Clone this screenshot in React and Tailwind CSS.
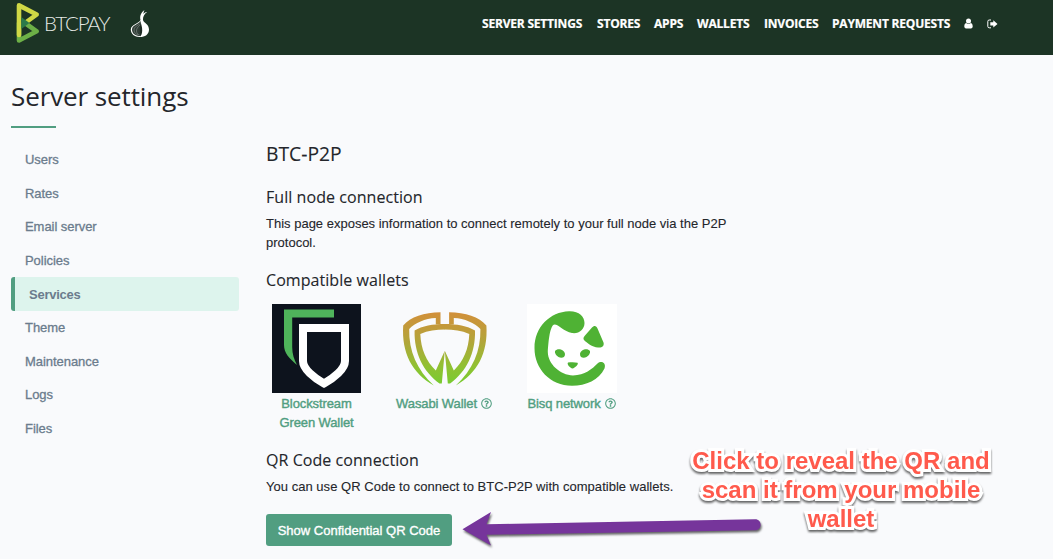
import React from "react";
import { FaRegQuestionCircle } from "react-icons/fa";

const NAV = [
  ["SERVER SETTINGS", "w-[101px]"],
  ["STORES", "w-[43px]"],
  ["APPS", "w-[29px]"],
  ["WALLETS", "w-[53px]"],
  ["INVOICES", "w-[54px]"],
  ["PAYMENT REQUESTS", "w-[118px]"],
];

const MENU = ["Users", "Rates", "Email server", "Policies", "Services", "Theme", "Maintenance", "Logs", "Files"];

function BtcPayMark() {
  return (
    <svg width="24" height="42" viewBox="0 0 24 42" fill="none">
      <path d="M3 21V38.500L20.700 29.300L9 21" stroke="#6db047" strokeWidth="4.600" strokeLinejoin="round" strokeLinecap="round" />
      <path d="M3 33V3.400L20.700 12.500L9 21" stroke="#d0d845" strokeWidth="4.600" strokeLinejoin="round" strokeLinecap="round" />
      <path d="M5.300 15L13.500 21L5.300 27Z" fill="#2c7a4a" />
    </svg>
  );
}

function OnionMark() {
  return (
    <svg width="20" height="29" viewBox="0 0 20 29" fill="none">
      <path d="M10.500 11C9.500 7 11 3.500 14.500 1C13.500 3 13.600 4 13.400 5C14.500 3.600 16 3 17 3C14 5 12.800 8 13 11C13.500 14 19 15 19 20.500C19 25.500 15 28 9.800 28C4.500 28 .8 25 .8 20.500C.8 15.500 9 14.500 10.500 11Z" fill="#fff" />
      <path d="M10.500 12C8.500 15.500 2 16 2 20.700C2 24.500 5.500 27 10 27Z" fill="#2f3d36" />
      <path d="M9.600 15C6 17.500 4 18 4 21C4 24 6.500 25.500 8.500 26M10 16C7.500 18.500 6.500 19.500 6.500 22C6.500 24 8 25.500 9.500 26" stroke="#858d89" strokeWidth=".6" />
      <path d="M10.500 12C11.300 16 12.300 18 12.200 21.500C12.100 24.500 11.500 26.500 10 27.500C10 24 9.500 20 10.500 12Z" fill="#1d2b24" />
    </svg>
  );
}

function UserIcon() {
  return (
    <svg width="9" height="11" viewBox="0 0 9 11" fill="#fff">
      <circle cx="4.500" cy="2.900" r="2.500" />
      <path d="M2.200 4.900C3.500 6.300 5.500 6.300 6.800 4.900C8.300 5.100 8.700 7 8.700 8.600C8.700 9.800 8 10.400 7 10.400H2C1 10.400 .3 9.800 .3 8.600C.3 7 .7 5.100 2.200 4.900Z" />
    </svg>
  );
}

function SignOutIcon() {
  return (
    <svg width="11" height="10" viewBox="0 0 11 10" fill="none">
      <path d="M4 1H2.200C1.300 1 .8 1.500 .8 2.400V7.400C.8 8.300 1.300 8.800 2.200 8.800H4" stroke="#fff" strokeWidth="1" />
      <path d="M3.300 3.300H6.300V1.200L10.500 4.900L6.300 8.600V6.500H3.300Z" fill="#fff" />
    </svg>
  );
}

function GreenWalletLogo() {
  return (
    <svg width="89" height="89" viewBox="0 0 89 89" fill="none">
      <rect width="89" height="89" fill="#0d131d" />
      <path d="M12 5.500H62V13.500H20.200V43C20.200 50 22 55.500 25 61C17 54 12 49 12 41Z" fill="#4fb45b" />
      <path d="M31 24H73V57C73 65 62 74 52 79.500C42 74 31 65 31 57Z" stroke="#fff" strokeWidth="8" />
    </svg>
  );
}

function WasabiHalf() {
  return (
    <>
      <path d="M40.500 8.300V20.500H35.800V14C25 14.500 15 19 9.200 25C8.700 47 17 66 33.800 81.500C12 69 1.500 49 3.200 21.500C10.500 13 24 8.500 40.500 8.300Z" />
      <path d="M45 20C33 20 22 22 14.600 26.500C14 49 23 67.500 39.500 79.500L41.800 79.600L44.800 46.700L35.800 66.500C26 57 21 45 20.300 30C28 26.500 36 25.500 45 25.500Z" />
    </>
  );
}

function WasabiLogo() {
  return (
    <svg width="89" height="89" viewBox="0 0 89 89" fill="none">
      <defs>
        <linearGradient id="wasabi" x1="0" y1="8" x2="0" y2="82" gradientUnits="userSpaceOnUse">
          <stop stopColor="#d28f3a" />
          <stop offset=".4" stopColor="#b2a53a" />
          <stop offset=".75" stopColor="#8fc232" />
          <stop offset="1" stopColor="#75cc30" />
        </linearGradient>
      </defs>
      <g fill="url(#wasabi)">
        <WasabiHalf />
        <g transform="matrix(-1 0 0 1 89.6 0)"><WasabiHalf /></g>
      </g>
    </svg>
  );
}

function BisqLogo() {
  return (
    <svg width="90" height="89" viewBox="0 0 90 89" fill="none">
      <rect width="90" height="89" fill="#fff" />
      <path d="M42 7.300C52 7 57.500 12.500 57.500 19C57.500 25.500 52 30 45 29C37 27.500 31.500 20.500 27.500 20.500C23 21 21.500 37 20.800 48C21 60 33 71 46 71.500C58 71 65 65 70.500 59.500C74.500 56 79.500 59 77.500 64.500C72 76 59 81.800 45 81.800C23 81.500 7.500 65 7.500 44C7.500 23 23 8 42 7.300Z" fill="#4fb234" />
      <path d="M65 23.500C67 21 69.500 21.500 70.500 24.500L76.500 38.500C77.500 42 75 44 71 43.500C65 43 60 39 57 36C56 34.500 56.500 33 58 31.500Z" fill="#4fb234" />
      <path d="M28 47C31 43.500 37.500 46 38 50C38.200 54 34 54.500 31.500 53C29 51.500 27.500 49 28 47ZM63 47C60 43.500 53.500 46 53 50C52.800 54 57 54.500 59.500 53C62 51.500 63.500 49 63 47ZM41 58.500C44 58 48 58 50.500 58.700C52 60 48 64 45.500 64.500C43 64 39.500 60 41 58.500Z" fill="#4fb234" />
    </svg>
  );
}

function Header() {
  return (
    <header className="flex h-[55px] items-start bg-[#1c3425] font-['Open_Sans',sans-serif] text-white">
      <div className="flex items-start pl-[16px] pt-[2px]">
        <BtcPayMark />
        <span className="ml-[4px] mt-[8px] w-[66px] whitespace-nowrap font-[Lato,sans-serif] text-[20.500px] font-light leading-[26px] tracking-[-1.2px] text-[#e5e9e6]">BTCPAY</span>
        <span className="ml-[20px] mt-[7px]"><OnionMark /></span>
      </div>
      <nav className="ml-auto mr-[55px] mt-[14px] flex h-[19px] items-center gap-[14px] text-[12px] font-bold leading-[19px] tracking-[-0.2px] [-webkit-text-stroke:0.2px]">
        {NAV.map(([label, width]) => (
          <a key={label} className={`${width} whitespace-nowrap`}>{label}</a>
        ))}
        <UserIcon />
        <SignOutIcon />
      </nav>
    </header>
  );
}

function Sidebar() {
  return (
    <ul className="mt-[15px] flex w-[228px] flex-col text-[13px] leading-[19px] text-[#6b7c8d]">
      {MENU.map((item) =>
        item === "Services" ? (
          <li key={item} className="flex h-[33.600px] items-center rounded-[3px] border-l-4 border-[#519e81] bg-[#ddf4ed] pl-[14px] font-bold tracking-[-0.25px]">{item}</li>
        ) : (
          <li key={item} className="flex h-[33.600px] items-center pl-[14px] tracking-[-0.05px] [-webkit-text-stroke:0.3px]">{item}</li>
        )
      )}
    </ul>
  );
}

function Wallet({ logo, help, children }) {
  return (
    <div className="flex w-[101px] flex-col items-center">
      {logo}
      <a className="mt-px flex items-center gap-[4px] whitespace-nowrap text-center text-[13px] leading-[19px] tracking-[-0.1px] text-[#519e81] [-webkit-text-stroke:0.4px]">
        <span>{children}</span>
        {help && <FaRegQuestionCircle size={11} />}
      </a>
    </div>
  );
}

function Callout() {
  return (
    <div className="absolute left-[680px] top-[446px] w-[322px] text-center font-['Liberation_Sans',Arial,sans-serif] text-[24px] font-bold leading-[29px] text-[#ff5a4c]">
      <div className="[-webkit-text-stroke:6px_white] [filter:drop-shadow(0_2px_1px_rgba(0,0,0,0.6))] [paint-order:stroke_fill] [stroke-linejoin:round]">
        Click to reveal the QR and<br />scan it from your mobile<br />wallet
      </div>
    </div>
  );
}

function Arrow() {
  return (
    <svg className="absolute left-[455px] top-[505px] [filter:drop-shadow(1px_2px_1px_rgba(0,0,0,0.6))]" width="315" height="50" viewBox="0 0 315 50">
      <path d="M7.500 24.300L36 7L31.500 19.300L300 14.300C307.500 14.300 307.500 25.300 300 25.300L31.500 29.700L36 40.500Z" fill="#76359b" />
    </svg>
  );
}

export default function App() {
  return (
    <div className="relative h-[559px] w-[1053px] overflow-hidden bg-[#f9fafc] font-['Liberation_Sans',Arial,sans-serif] text-[#24262b]">
      <Header />
      <main className="pl-[11px] pt-[23px]">
        <h1 className="font-['Open_Sans',sans-serif] text-[26px] leading-[36px] tracking-[-0.1px]">Server settings</h1>
        <div className="mt-[12px] h-[2px] w-[45px] bg-[#519e81]" />
        <div className="flex gap-[27px]">
          <Sidebar />
          <section className="flex w-[480px] flex-col text-[13px] leading-[19px] [-webkit-text-stroke:0.1px]">
            <h2 className="mt-[14px] font-['Open_Sans',sans-serif] text-[19.300px] leading-[24px]">BTC-P2P</h2>
            <h3 className="mt-[21px] font-['Open_Sans',sans-serif] text-[16px] leading-[20px] tracking-[0.06px]">Full node connection</h3>
            <p className="mt-[7px] whitespace-nowrap">This page exposes information to connect remotely to your full node via the P2P<br />protocol.</p>
            <h3 className="mt-[18px] font-['Open_Sans',sans-serif] text-[16px] leading-[20px] tracking-[0.06px]">Compatible wallets</h3>
            <div className="mt-[14px] flex gap-[26.500px]">
              <Wallet logo={<GreenWalletLogo />}>Blockstream<br />Green Wallet</Wallet>
              <Wallet logo={<WasabiLogo />} help>Wasabi Wallet</Wallet>
              <Wallet logo={<BisqLogo />} help>Bisq network</Wallet>
            </div>
            <h3 className="mt-[18px] font-['Open_Sans',sans-serif] text-[16px] leading-[20px] tracking-[0.06px]">QR Code connection</h3>
            <p className="mt-[7px] whitespace-nowrap tracking-[0.03px]">You can use QR Code to connect to BTC-P2P with compatible wallets.</p>
            <button className="mt-[18px] h-[32px] w-[186px] whitespace-nowrap rounded-[3px] bg-[#519e81] text-[13px] text-white [-webkit-text-stroke:0.35px]">Show Confidential QR Code</button>
          </section>
        </div>
      </main>
      <Arrow />
      <Callout />
    </div>
  );
}
